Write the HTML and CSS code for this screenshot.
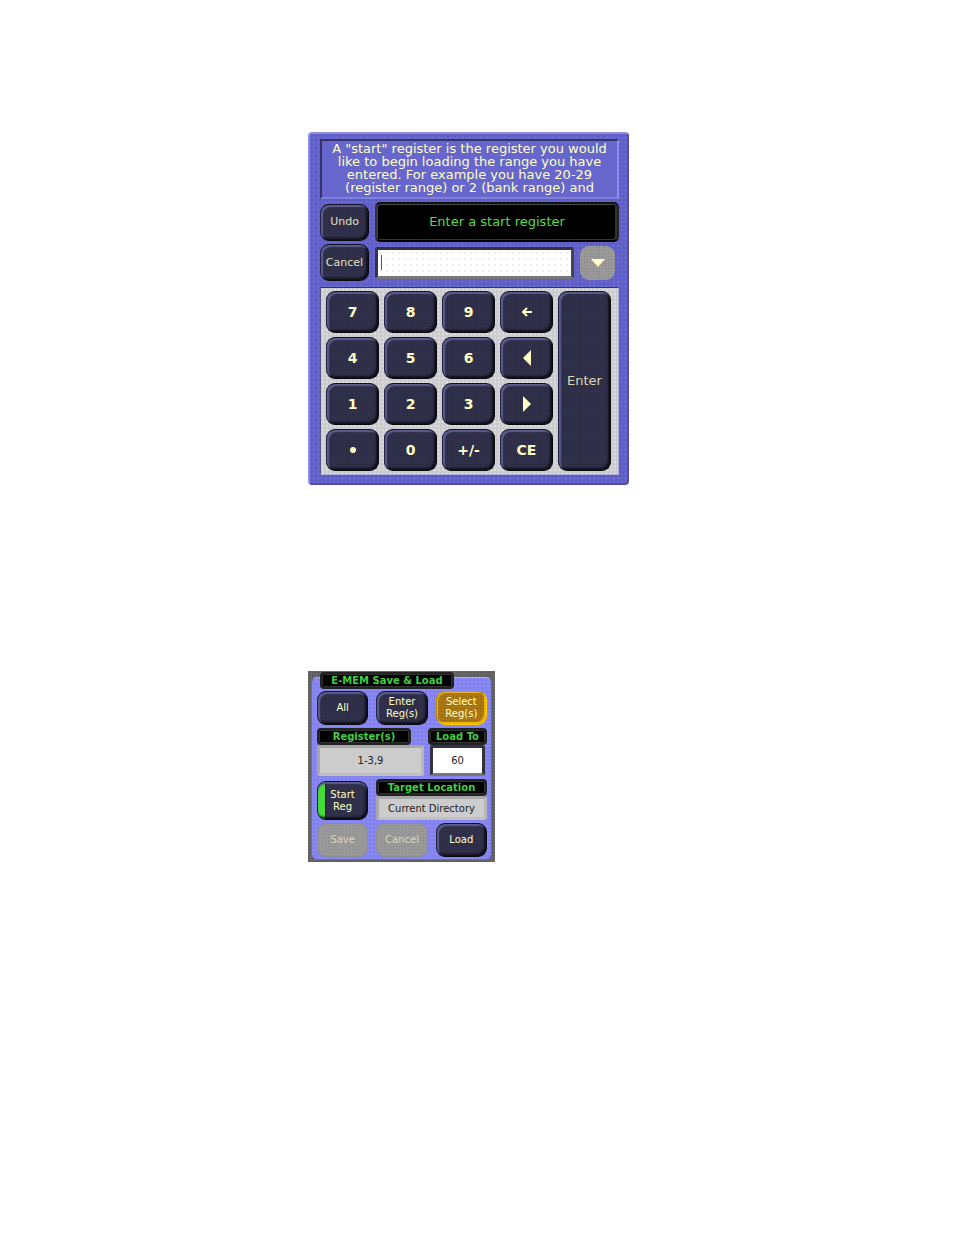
FILE: index.html
```html
<!DOCTYPE html>
<html lang="en">
<head>
<meta charset="utf-8">
<meta name="viewport" content="width=device-width, initial-scale=1">
<title>E-MEM Save &amp; Load</title>
<link rel="stylesheet" href="styles.css">
</head>
<body>
<main class="page">
  <section class="entry" aria-label="Start register entry">
    <p class="message">A "start" register is the register you would<br>like to begin loading the range you have<br>entered. For example you have 20-29<br>(register range) or 2 (bank range) and</p>
    <div class="row">
      <button class="key side" type="button">Undo</button>
      <label class="prompt" for="start-register">Enter a start register</label>
    </div>
    <div class="row entry-row">
      <button class="key side" type="button">Cancel</button>
      <div class="input-wrap"><input class="entry-input" id="start-register" type="text"><span class="caret"></span></div>
      <button class="drop" type="button" aria-label="Show list"><svg width="14" height="8" viewBox="0 0 14 8"><path d="M0 0h14L7 8z" fill="#ffffc8"/></svg></button>
    </div>
    <div class="keypad">
      <button class="key" type="button">7</button>
      <button class="key" type="button">8</button>
      <button class="key" type="button">9</button>
      <button class="key" type="button" aria-label="Backspace"><svg width="12" height="10" viewBox="0 0 12 10"><path d="M11 5H2M6 1L2 5l4 4" fill="none" stroke="#ffffc8" stroke-width="2"/></svg></button>
      <button class="key enter" type="button">Enter</button>
      <button class="key" type="button">4</button>
      <button class="key" type="button">5</button>
      <button class="key" type="button">6</button>
      <button class="key" type="button" aria-label="Left"><svg width="8" height="16" viewBox="0 0 8 16"><path d="M8 0v16L0 8z" fill="#ffffc8"/></svg></button>
      <button class="key" type="button">1</button>
      <button class="key" type="button">2</button>
      <button class="key" type="button">3</button>
      <button class="key" type="button" aria-label="Right"><svg width="8" height="16" viewBox="0 0 8 16"><path d="M0 0v16l8-8z" fill="#ffffc8"/></svg></button>
      <button class="key" type="button" aria-label="Decimal point"><svg width="6" height="6" viewBox="0 0 6 6"><circle cx="3" cy="3" r="3" fill="#ffffc8"/></svg></button>
      <button class="key" type="button">0</button>
      <button class="key" type="button">+/-</button>
      <button class="key" type="button">CE</button>
    </div>
  </section>

  <section class="memory" aria-labelledby="memory-title">
    <h2 class="caption title" id="memory-title">E-MEM Save &amp; Load</h2>
    <div class="memory-body">
      <div class="trio">
        <button class="key small" type="button">All</button>
        <button class="key small" type="button">Enter<br>Reg(s)</button>
        <button class="key small gold" type="button">Select<br>Reg(s)</button>
      </div>
      <div class="registers">
        <label class="caption registers-label" for="registers">Register(s)</label>
        <label class="caption" for="load-to">Load To</label>
        <input class="field" id="registers" type="text" value="1-3,9" readonly>
        <input class="field white" id="load-to" type="text" value="60">
      </div>
      <div class="target">
        <button class="key small start" type="button">Start<br>Reg</button>
        <div class="location">
          <label class="caption" for="location">Target Location</label>
          <input class="field low" id="location" type="text" value="Current Directory" readonly>
        </div>
      </div>
      <div class="trio">
        <button class="key small off" type="button" disabled>Save</button>
        <button class="key small off" type="button" disabled>Cancel</button>
        <button class="key small" type="button">Load</button>
      </div>
    </div>
  </section>
</main>
</body>
</html>
```
FILE: styles.css
```css
* { box-sizing: border-box; }

body {
  margin: 0;
  background: #fff;
  font-family: "DejaVu Sans", Verdana, sans-serif;
}

.page { padding: 132px 16px 132px 308px; }

.entry {
  max-width: 321px;
  padding: 5px 8px 8px 10px;
  border: 2px solid;
  border-color: #9090d8 #5050a0 #5050a0 #8c8cf0;
  border-radius: 4px;
  background-color: #6464cc;
  background-image:
    radial-gradient(circle, #5a5abe 1px, transparent 1px),
    radial-gradient(circle, #6e6eda 1px, transparent 1px);
  background-size: 4px 4px, 6px 6px;
}

.message {
  margin: 0 0 3px;
  padding: 1px 0 3px;
  border: 2px solid;
  border-color: #333366 #9090f0 #8080dc #333366;
  background: #6666cc;
  color: #ffffc8;
  font-size: 13px;
  line-height: 13px;
  text-align: center;
  white-space: nowrap;
}

.row {
  display: flex;
  align-items: center;
  gap: 6px;
}

.key {
  display: flex;
  align-items: center;
  justify-content: center;
  min-width: 0;
  margin: 0;
  padding: 0;
  border: 1px solid;
  border-color: #111122 #08080f #08080f #222244;
  border-radius: 9px;
  background-color: #30304a;
  background-image: radial-gradient(circle, #26263c 1px, transparent 1px);
  background-size: 3px 3px;
  box-shadow: inset 2px 2px 1px #5c5c8c, inset -2px -2px 2px #11111c;
  color: #ffffc8;
  font-family: inherit;
  font-size: 14px;
  font-weight: bold;
  line-height: 16px;
}

.side {
  flex: 0 0 49px;
  height: 37px;
  color: #e0e0c0;
  font-size: 11px;
  font-weight: normal;
}

.prompt {
  flex: 1;
  padding: 10px 0;
  border: 2px solid;
  border-color: #111 #222 #000 #333;
  border-radius: 5px;
  background: #000;
  box-shadow: inset 1px 1px 0 #44444c, inset -2px -1px 0 #333;
  color: #55dd44;
  font-size: 13px;
  line-height: 16px;
  text-align: center;
}

.entry-row { margin-top: 2px; }

.input-wrap {
  position: relative;
  flex: 1;
}

.entry-input {
  display: block;
  width: 100%;
  height: 32px;
  padding: 0 8px;
  border: 3px solid;
  border-color: #333344 #44444c #77777c #333344;
  border-radius: 3px;
  background-color: #fff;
  background-image: radial-gradient(circle, #eee 1px, transparent 1px);
  background-size: 6px 6px;
  font: inherit;
}

.caret {
  position: absolute;
  top: 8px;
  left: 6px;
  width: 1px;
  height: 15px;
  background: #555;
}

.drop {
  display: flex;
  align-items: center;
  justify-content: center;
  flex: 0 0 35px;
  height: 34px;
  margin-right: 4px;
  padding: 0;
  border: 0;
  border-radius: 9px;
  background-color: #999;
  background-image: radial-gradient(circle, #858585 1px, transparent 1px);
  background-size: 3px 3px;
}

.keypad {
  display: grid;
  grid-template-columns: repeat(5, 1fr);
  grid-auto-rows: 42px;
  gap: 4px 5px;
  margin-top: 6px;
  padding: 3px 7px 3px 5px;
  border: 1px solid;
  border-color: #333366 #b0b0dc #b0b0dc #555588;
  background-color: #ccccd0;
  background-image: radial-gradient(circle, #dcdcd8 1px, transparent 1px);
  background-size: 4px 4px;
}

.enter {
  grid-row: 1 / span 4;
  grid-column: 5;
  color: #d8d8b8;
  font-size: 13px;
  font-weight: normal;
}

.memory {
  max-width: 187px;
  margin-top: 186px;
  padding: 1px 3px 2px;
  background-color: #666;
  background-image: radial-gradient(circle, #4c4c4c 1px, transparent 1px);
  background-size: 3px 3px;
}

.memory-body {
  display: grid;
  gap: 3px;
  margin-top: -12px;
  padding: 13px 4px 2px 5px;
  border: 1px solid #6666bb;
  border-top-color: #aaaaff;
  border-radius: 6px;
  background-color: #8888f4;
  background-image: radial-gradient(circle, #7e7ee6 1px, transparent 1px);
  background-size: 4px 4px;
}

.caption {
  display: block;
  margin: 0;
  border: 2px solid #222;
  border-radius: 4px;
  background: #000;
  box-shadow: inset 0 0 0 1px #303030;
  color: #44cc44;
  font-size: 10px;
  font-weight: bold;
  line-height: 13px;
  text-align: center;
  white-space: nowrap;
}

.title {
  position: relative;
  width: 134px;
  margin-left: 9px;
}

.trio {
  display: grid;
  grid-template-columns: repeat(3, 1fr);
  gap: 8px;
}

.small {
  height: 34px;
  font-size: 10px;
  font-weight: normal;
  line-height: 12px;
}

.gold {
  border-color: #cc9900 #ffcc00 #ffcc00 #bb8800;
  background-color: #aa7711;
  background-image: radial-gradient(circle, #8c600c 1px, transparent 1px);
  box-shadow: inset 1px 1px 1px #eebb33, inset -2px -2px 1px #f4b800;
}

.off {
  border-color: #8c8c94;
  background-color: #999;
  background-image: radial-gradient(circle, #888 1px, transparent 1px);
  box-shadow: none;
  color: #d8d8b8;
}

.registers {
  display: grid;
  grid-template-columns: 1fr 59px;
  column-gap: 4px;
}

.registers-label { margin-right: 13px; }

.field {
  width: 100%;
  min-width: 0;
  height: 31px;
  padding: 0;
  border: 3px solid;
  border-color: #a8a8a8 #b8b8b8 #c0c0c0 #a8a8a8;
  border-radius: 3px;
  background: #ccc;
  color: #222;
  font-family: inherit;
  font-size: 10px;
  text-align: center;
}

.white {
  width: auto;
  margin: 0 2px;
  border-color: #333344 #333 #777 #333344;
  background: #fff;
}

.low {
  display: block;
  height: 24px;
}

.target {
  display: grid;
  grid-template-columns: 51px 1fr;
  align-items: end;
  gap: 8px;
}

.start {
  height: 39px;
  background-image: linear-gradient(90deg, #44dd33 7px, #111122 7px, #111122 8px, transparent 8px);
  background-size: auto;
  box-shadow: inset 0 2px 1px #5c5c8c, inset -2px -2px 2px #11111c;
}
```
